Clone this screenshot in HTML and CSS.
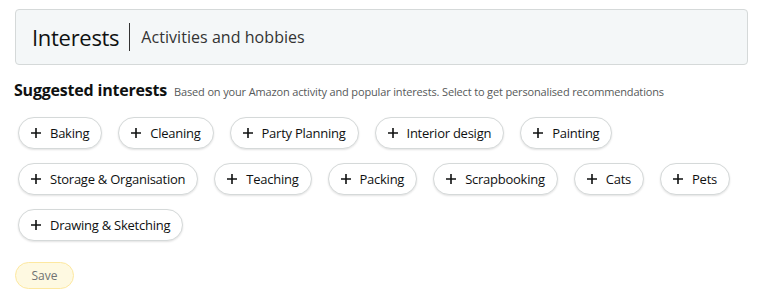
FILE: index.html
```html
<!DOCTYPE html>
<html lang="en">
<head>
<meta charset="utf-8">
<title>Interests</title>
<link rel="stylesheet" href="styles.css">
</head>
<body>
<div class="page">
  <header class="head">
    <h1 class="head-title">Interests</h1>
    <span class="head-divider"></span>
    <span class="head-sub">Activities and hobbies</span>
  </header>
  <div class="section-title">
    <h2 class="st-main">Suggested interests</h2>
    <span class="st-note">Based on your Amazon activity and popular interests. Select to get personalised recommendations</span>
  </div>
  <div class="chips">
    <button class="chip"><svg class="plus" viewBox="0 0 10 10"><path d="M5 0v10M0 5h10"/></svg>Baking</button>
    <button class="chip"><svg class="plus" viewBox="0 0 10 10"><path d="M5 0v10M0 5h10"/></svg>Cleaning</button>
    <button class="chip"><svg class="plus" viewBox="0 0 10 10"><path d="M5 0v10M0 5h10"/></svg>Party Planning</button>
    <button class="chip"><svg class="plus" viewBox="0 0 10 10"><path d="M5 0v10M0 5h10"/></svg>Interior design</button>
    <button class="chip"><svg class="plus" viewBox="0 0 10 10"><path d="M5 0v10M0 5h10"/></svg>Painting</button>
    <button class="chip"><svg class="plus" viewBox="0 0 10 10"><path d="M5 0v10M0 5h10"/></svg>Storage &amp; Organisation</button>
    <button class="chip"><svg class="plus" viewBox="0 0 10 10"><path d="M5 0v10M0 5h10"/></svg>Teaching</button>
    <button class="chip"><svg class="plus" viewBox="0 0 10 10"><path d="M5 0v10M0 5h10"/></svg>Packing</button>
    <button class="chip"><svg class="plus" viewBox="0 0 10 10"><path d="M5 0v10M0 5h10"/></svg>Scrapbooking</button>
    <button class="chip"><svg class="plus" viewBox="0 0 10 10"><path d="M5 0v10M0 5h10"/></svg>Cats</button>
    <button class="chip"><svg class="plus" viewBox="0 0 10 10"><path d="M5 0v10M0 5h10"/></svg>Pets</button>
    <button class="chip"><svg class="plus" viewBox="0 0 10 10"><path d="M5 0v10M0 5h10"/></svg>Drawing &amp; Sketching</button>
  </div>
  <button class="save">Save</button>
</div>
</body>
</html>
```
FILE: styles.css
```css
* { box-sizing: border-box; }
html, body { margin: 0; padding: 0; background: #fff; }
body {
  font-family: "Open Sans", "Noto Sans", Arial, sans-serif;
  color: #0f1111;
}
.page {
  padding: 9px 20px 0 15px;
}
.head {
  display: flex;
  align-items: center;
  height: 56px;
  background: #f4f7f8;
  border: 1px solid #d5d9d9;
  border-radius: 4px;
  padding: 0 16px;
}
.head-title {
  margin: 0;
  font-size: 22px;
  font-weight: 400;
  letter-spacing: -0.3px;
  color: #0f1111;
}
.head-divider {
  width: 1px;
  height: 28px;
  background: #333;
  margin: 0 11px 0 10px;
}
.head-sub {
  font-size: 16px;
  color: #333;
  letter-spacing: 0.05px;
}
.section-title {
  display: flex;
  align-items: baseline;
  margin: 14px 0 0 -1px;
}
.st-main {
  margin: 0;
  font-size: 16px;
  font-weight: 700;
  letter-spacing: -0.2px;
}
.st-note {
  margin-left: 7px;
  font-size: 11px;
  color: #565959;
  letter-spacing: -0.15px;
}
.chips {
  display: flex;
  flex-wrap: wrap;
  gap: 14px 16px;
  margin: 16px 0 0 3px;
}
.chip {
  display: inline-flex;
  align-items: center;
  height: 32px;
  padding: 0 12px 0 12px;
  background: #fff;
  border: 1px solid #d5d9d9;
  border-radius: 16px;
  box-shadow: 0 1px 2px rgba(15,17,17,0.12);
  font-family: inherit;
  font-size: 13px;
  color: #0f1111;
  letter-spacing: -0.25px;
}
.plus {
  width: 10px;
  height: 10px;
  margin-right: 9px;
  fill: none;
  stroke: #0f1111;
  stroke-width: 1.6;
}
.save {
  display: block;
  margin-top: 21px;
  width: 59px;
  height: 27px;
  background: #fef9e1;
  border: 1px solid #fde8a0;
  border-radius: 14px;
  font-family: inherit;
  font-size: 12px;
  color: #6f7373;
  padding: 0;
}
```
